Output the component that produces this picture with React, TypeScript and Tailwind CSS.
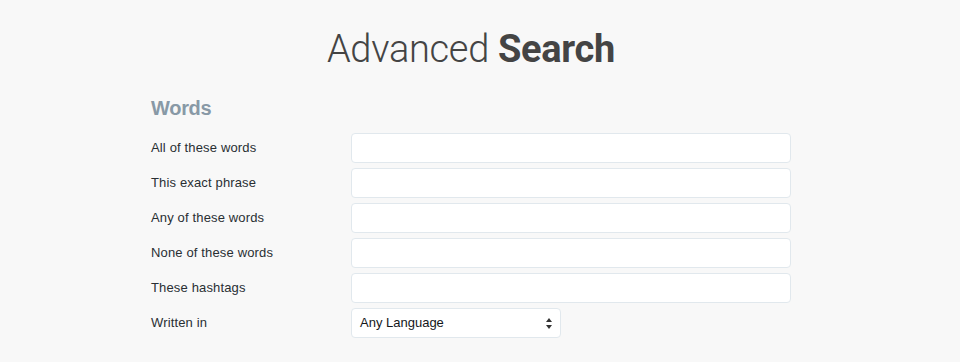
const rows = [
  "All of these words",
  "This exact phrase",
  "Any of these words",
  "None of these words",
  "These hashtags",
];

function Row({ label, children }: { label: string; children: React.ReactNode }) {
  return (
    <div className="flex h-[30px] items-center">
      <label className="w-[200px] shrink-0 text-[13px] tracking-[0.15px] text-[#292f33]">{label}</label>
      {children}
    </div>
  );
}

export default function App() {
  return (
    <div className="min-h-[362px] bg-[#f8f8f8] pr-[18px] font-['Liberation_Sans',Arial,sans-serif]">
      <div className="mx-auto w-[640px] pt-[26px]">
        <h1 className="text-center font-['Roboto',sans-serif] text-[38px] font-light leading-[46px] tracking-[-0.3px] text-[#444]">
          Advanced <span className="font-bold">Search</span>
        </h1>
        <h2 className="mt-[24px] text-[20px] font-bold leading-6 tracking-[-0.3px] text-[#8899a6]">Words</h2>
        <div className="mt-[13px] flex flex-col gap-[5px]">
          {rows.map((r) => (
            <Row key={r} label={r}>
              <input className="h-[30px] w-[440px] rounded-[4px] border border-[#e1e8ed] bg-white px-2 text-[13px] outline-none" />
            </Row>
          ))}
          <Row label="Written in">
            <div className="flex h-[30px] w-[210px] items-center justify-between rounded-[4px] border border-[#e1e8ed] bg-white pl-2 pr-[8px] text-[13px] text-[#14171a]">
              <span>Any Language</span>
              <svg width="6" height="11" viewBox="0 0 6 11" className="fill-[#333]">
                <path d="M3 0 L6 4 L0 4 Z" />
                <path d="M0 7 L6 7 L3 11 Z" />
              </svg>
            </div>
          </Row>
        </div>
      </div>
    </div>
  );
}
